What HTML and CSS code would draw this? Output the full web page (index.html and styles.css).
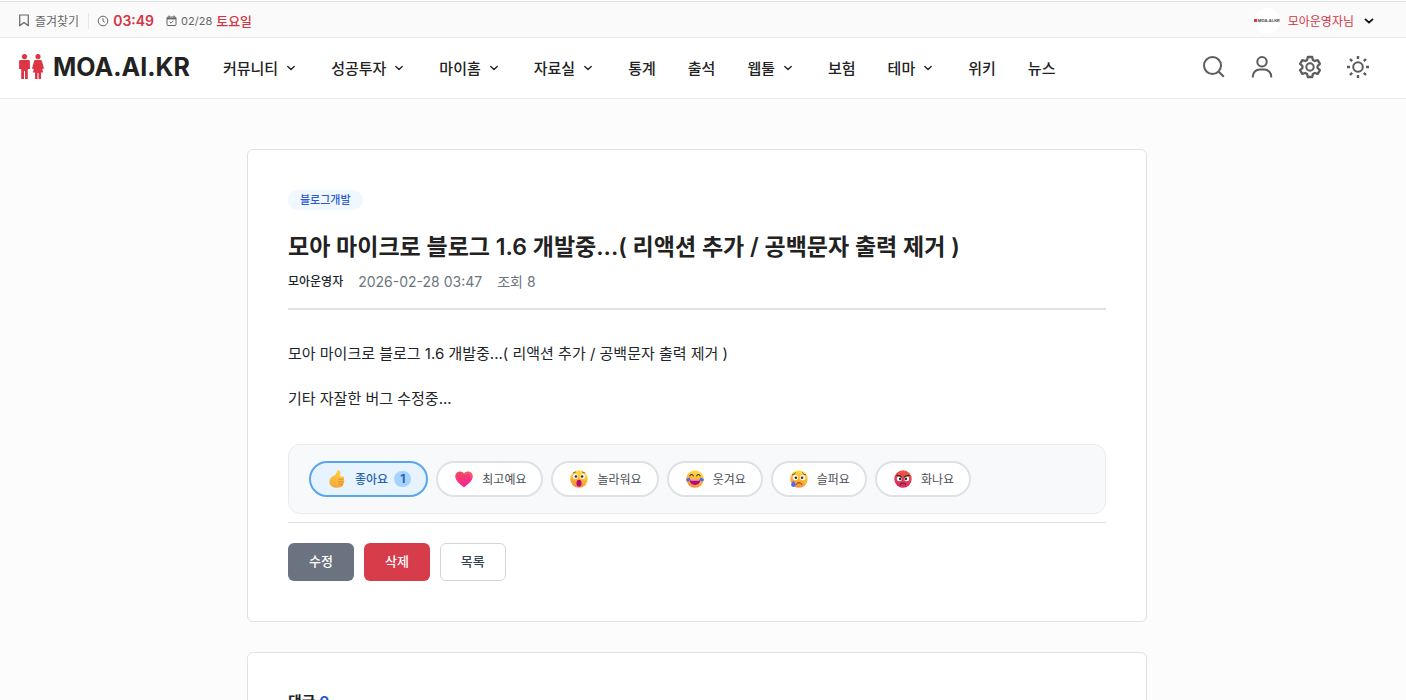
FILE: index.html
```html
<!DOCTYPE html>
<html lang="ko">
<head>
    <meta charset="UTF-8">
    <meta name="viewport" content="width=device-width, initial-scale=1.0">
    <title>모아 마이크로 블로그 1.6 개발중 - MOA.AI.KR</title>
    <link rel="stylesheet" href="styles.css">
</head>
<body>

    <!-- 공용 아이콘 -->
    <svg class="defs" aria-hidden="true">
        <defs>
            <linearGradient id="face" x1="0.7" y1="0" x2="0.4" y2="1">
                <stop offset="0" stop-color="#ffe34d"/>
                <stop offset="0.6" stop-color="#ffb02e"/>
                <stop offset="1" stop-color="#f58a45"/>
            </linearGradient>
            <linearGradient id="thumb" x1="0.6" y1="0" x2="0.4" y2="1">
                <stop offset="0" stop-color="#ffd03c"/>
                <stop offset="1" stop-color="#f5a83c"/>
            </linearGradient>
            <linearGradient id="heart" x1="0.3" y1="0" x2="0.6" y2="1">
                <stop offset="0" stop-color="#f4495c"/>
                <stop offset="1" stop-color="#f9209a"/>
            </linearGradient>
            <linearGradient id="angry" x1="0.6" y1="0" x2="0.4" y2="1">
                <stop offset="0" stop-color="#ee5a3c"/>
                <stop offset="1" stop-color="#d8256a"/>
            </linearGradient>
        </defs>
        <symbol id="chevron" viewBox="0 0 12 12">
            <path d="M2.8 4.6 6 7.6l3.2-3" fill="none" stroke="currentColor" stroke-width="1.4" stroke-linecap="round" stroke-linejoin="round"/>
        </symbol>
    </svg>

    <!-- 상단 바 -->
    <div class="topbar">
        <div class="topbar-left">
            <a href="#" class="bookmark">
                <svg width="12" height="13" viewBox="0 0 12 13"><path d="M1.700 1h8.600v10.800L6 8.600l-4.300 3.200z" fill="none" stroke="currentColor" stroke-width="1.200" stroke-linejoin="round"/></svg>
                즐겨찾기
            </a>
            <span class="clock">
                <svg width="12" height="12" viewBox="0 0 12 12" fill="none" stroke="currentColor"><circle cx="6" cy="6" r="4.8"/><path d="M6 3.2V6l1.8 1.2"/></svg>
                <strong class="time">03:49</strong>
            </span>
            <span class="date">
                <svg width="11" height="12" viewBox="0 0 11 12" fill="none" stroke="currentColor"><rect x="1" y="2" width="9" height="8.5" rx="1"/><path d="M1 3.6h9" stroke-width="1.6"/><path d="M3 .5V3M8 .5V3M3.6 6.8 5 8.2l2.5-2.5"/></svg>
                <span class="day">02/28</span>
                <strong class="weekday">토요일</strong>
            </span>
        </div>
        <a href="#" class="member">
            <span class="avatar"><span class="avatar-dot"></span>MOA.AI.KR</span>
            <span class="member-name">모아운영자님</span>
            <svg class="member-arrow" width="14" height="14" viewBox="0 0 12 12"><path d="M3 4.6 6 7.4l3-2.8" fill="none" stroke="currentColor" stroke-width="1.6" stroke-linecap="round" stroke-linejoin="round"/></svg>
        </a>
    </div>

    <!-- 메뉴 -->
    <header>
        <a href="#" class="logo">
            <svg width="26" height="28" viewBox="0 0 26 28" fill="currentColor">
                <circle cx="6.500" cy="3.600" r="2.600"/>
                <path d="M2.500 7h8a1.400 1.400 0 0 1 1.400 1.400V16H9.800v10H7v-8H6v8H3.200V16H1.100V8.400A1.400 1.400 0 0 1 2.500 7z"/>
                <circle cx="20" cy="3.600" r="2.600"/>
                <path d="M17.500 7h5a1.500 1.500 0 0 1 1.400 1l2.100 7.400-1.800.8 1 3.300H23V26h-2.500v-6h-1v6H17v-6.500h-2.200l1-3.300-1.800-.8L16.100 8a1.500 1.500 0 0 1 1.400-1z"/>
            </svg>
            MOA.AI.KR
        </a>
        <nav>
            <a href="#">커뮤니티<svg class="arrow"><use href="#chevron"/></svg></a>
            <a href="#">성공투자<svg class="arrow"><use href="#chevron"/></svg></a>
            <a href="#">마이홈<svg class="arrow"><use href="#chevron"/></svg></a>
            <a href="#">자료실<svg class="arrow"><use href="#chevron"/></svg></a>
            <a href="#">통계</a>
            <a href="#">출석</a>
            <a href="#">웹툴<svg class="arrow"><use href="#chevron"/></svg></a>
            <a href="#">보험</a>
            <a href="#">테마<svg class="arrow"><use href="#chevron"/></svg></a>
            <a href="#">위키</a>
            <a href="#">뉴스</a>
        </nav>
        <div class="tools">
            <button type="button" aria-label="검색">
                <svg viewBox="0 0 24 24"><circle cx="10.500" cy="10.500" r="8.500"/><path d="m16.800 16.800 5 5"/></svg>
            </button>
            <button type="button" aria-label="회원">
                <svg viewBox="0 0 24 24"><circle cx="12" cy="6.700" r="4.700"/><path d="M2.800 22.500v-1a7 7 0 0 1 7-7h4.400a7 7 0 0 1 7 7v1"/></svg>
            </button>
            <button type="button" aria-label="설정">
                <svg viewBox="0 0 24 24"><circle cx="12" cy="12" r="3.700"/><path d="M9.800 2h4.400l.7 3 1.800 1 3-.9 2.200 3.800-2.300 2.100v2l2.300 2.100-2.200 3.800-3-.9-1.800 1-.7 3H9.800l-.7-3-1.800-1-3 .9-2.200-3.800L4.400 13v-2L2.100 8.900l2.200-3.800 3 .9 1.800-1z" stroke-width="2.300" stroke-linejoin="round"/></svg>
            </button>
            <button type="button" aria-label="테마 전환">
                <svg viewBox="0 0 24 24"><circle cx="12" cy="12" r="4.800"/><path d="M12 1v3M12 20v3M1 12h3M20 12h3M4 4l2.200 2.200M17.800 17.800 20 20M4 20l2.200-2.200M17.800 6.200 20 4" stroke-width="2.400"/></svg>
            </button>
        </div>
    </header>

    <main>
        <!-- 본문 -->
        <article class="card">
            <a href="#" class="category">블로그개발</a>
            <h1>모아 마이크로 블로그 1.6 개발중...( 리액션 추가 / 공백문자 출력 제거 )</h1>
            <div class="meta">
                <span class="author">모아운영자</span>
                <span>2026-02-28 03:47</span>
                <span>조회 8</span>
            </div>

            <div class="content">
                <p>모아 마이크로 블로그 1.6 개발중...( 리액션 추가 / 공백문자 출력 제거 )</p>
                <p>기타 자잘한 버그 수정중...</p>
            </div>

            <!-- 리액션 -->
            <div class="reactions">
                <button type="button" class="reaction active">
                    <svg class="emoji" viewBox="0 0 32 32">
                        <path d="M17.500.5c3-.8 4.800 1.500 4.500 5L21 11.500h4.500c3.200 0 4.200 3.200 2.400 4.800 1.700 1.200 1.500 3.600 0 4.600 1.100 1.500.6 3.600-.9 4.300.5 2.200-.7 4.100-2.800 4.700-4.500 1.500-9.500 2-13.500 1C5.500 29.500 2.500 26 2.500 21c0-4.500 2-7 5.500-9.500C12.500 8.500 15.300 6.500 16 2.500c.1-1 .7-1.800 1.500-2z" fill="url(#thumb)"/>
                        <path d="M19 16.500h8M19 21h8M19 25.200h7" stroke="#d9803a" stroke-width="1.300" stroke-linecap="round"/>
                    </svg>
                    좋아요 <span class="count">1</span>
                </button>
                <button type="button" class="reaction">
                    <svg class="emoji" viewBox="0 0 32 32">
                        <path d="M9 2.500c3 0 5.500 1.500 7 4 1.500-2.500 4-4 7-4 5 0 8.500 4 8.500 8.500C31.500 19 22.500 26 16 30.500 9.500 26 .5 19 .5 11 .5 6.500 4 2.500 9 2.500z" fill="url(#heart)"/>
                        <path d="M19 8c1-2 3-3.200 5-3 3.600.400 5.400 4.500 4.500 8" fill="none" stroke="#ff6b68" stroke-width="2" stroke-linecap="round"/>
                    </svg>
                    최고예요
                </button>
                <button type="button" class="reaction">
                    <svg class="emoji" viewBox="0 0 32 32">
                        <circle cx="16" cy="16" r="15.500" fill="url(#face)"/>
                        <circle cx="9.500" cy="11.500" r="4.500" fill="#fff"/><circle cx="22.500" cy="11.500" r="4.500" fill="#fff"/>
                        <circle cx="10.500" cy="11.500" r="2.300" fill="#402a32"/><circle cx="21.500" cy="11.500" r="2.300" fill="#402a32"/>
                        <path d="M6 5.200 10 3.500M26 5.200 22 3.500" stroke="#6d4534" stroke-width="1.400" stroke-linecap="round"/>
                        <ellipse cx="16" cy="23.500" rx="4.500" ry="6" fill="#b5087a"/>
                    </svg>
                    놀라워요
                </button>
                <button type="button" class="reaction">
                    <svg class="emoji" viewBox="0 0 32 32">
                        <circle cx="16" cy="16" r="15.500" fill="url(#face)"/>
                        <path d="M7 10.500c1-3.500 5-3.500 6 0M19 10.500c1-3.500 5-3.500 6 0" fill="none" stroke="#402a32" stroke-width="1.800" stroke-linecap="round"/>
                        <path d="M6.500 17h19c0 6-4 9.500-9.500 9.500S6.500 23 6.500 17z" fill="#b5087a"/>
                        <path d="M8 17h16v1.600H8z" fill="#fff"/>
                        <path d="M7 13.500c1 4-.5 7-3.500 7S-.5 17.500 1 16s4-2 6-2.500zM25 13.500c-1 4 .5 7 3.500 7s4-3 2.500-4.500-4-2-6-2.500z" fill="#4c6cf0"/>
                    </svg>
                    웃겨요
                </button>
                <button type="button" class="reaction">
                    <svg class="emoji" viewBox="0 0 32 32">
                        <circle cx="16" cy="16" r="15.500" fill="url(#face)"/>
                        <circle cx="9.500" cy="13.500" r="4.600" fill="#fff"/><circle cx="22.500" cy="13.500" r="4.600" fill="#fff"/>
                        <circle cx="10.500" cy="13.800" r="2.300" fill="#402a32"/><circle cx="21.500" cy="13.800" r="2.300" fill="#402a32"/>
                        <path d="M4.500 8.500c2.500-.5 4-1.500 5-3.500M27.500 8.500c-2.500-.5-4-1.500-5-3.500M11 25.500c1.500-4 8.500-4 10 0" fill="none" stroke="#5a3435" stroke-width="1.700" stroke-linecap="round"/>
                        <path d="M6 19c2.500 3 4 5 4 7.200C10 28.500 8.300 30 6 30s-4-1.500-4-3.800C2 24 3.500 22 6 19z" fill="#4c6cf0"/>
                    </svg>
                    슬퍼요
                </button>
                <button type="button" class="reaction">
                    <svg class="emoji" viewBox="0 0 32 32">
                        <circle cx="16" cy="16" r="15.500" fill="url(#angry)"/>
                        <circle cx="9.500" cy="15.500" r="4.500" fill="#fff"/><circle cx="22.500" cy="15.500" r="4.500" fill="#fff"/>
                        <circle cx="11" cy="15.800" r="2.300" fill="#402a32"/><circle cx="21" cy="15.800" r="2.300" fill="#402a32"/>
                        <path d="M5 9.500c4 0 7 1 8.500 3.500M27 9.500c-4 0-7 1-8.500 3.500M11 26c1.500-4 8.500-4 10 0" fill="none" stroke="#402a32" stroke-width="1.900" stroke-linecap="round"/>
                    </svg>
                    화나요
                </button>
            </div>

            <div class="actions">
                <button type="button" class="btn btn-edit">수정</button>
                <button type="button" class="btn btn-delete">삭제</button>
                <button type="button" class="btn btn-list">목록</button>
            </div>
        </article>

        <!-- 댓글 -->
        <section class="card comments">
            <h2>댓글 <span>0</span></h2>
        </section>
    </main>

</body>
</html>
```
FILE: styles.css
```css
* { box-sizing: border-box; }
html { overflow: hidden; height: 100%; }
body {
    margin: 0; height: 100%; overflow: hidden;
    background: #fcfcfc; color: #212529;
    font-family: Inter, "Noto Sans CJK KR", sans-serif;
    font-size: 15px;
}
a { color: inherit; text-decoration: none; }
button { font-family: inherit; cursor: pointer; }
svg { flex: none; }
.defs { position: absolute; width: 0; height: 0; }

/* 상단 바 */
.topbar {
    display: flex; justify-content: space-between; align-items: center;
    height: 38px; padding: 4px 30px 0 18px;
    background: linear-gradient(#fff 1px, #dee0e2 1px, #dee0e2 2px, #fafafa 2px);
    border-bottom: 1px solid #ececec;
    color: #666; font-size: 12px;
}
.topbar-left, .bookmark, .clock, .date, .member { display: flex; align-items: center; }
.bookmark { gap: 5px; padding-right: 9px; border-right: 1px solid #e8e8e8; height: 16px; }
.clock { gap: 4px; margin-left: 8px; }
.time { color: #d63343; font-size: 14px; font-weight: 600; }
.date { gap: 4px; margin-left: 12px; }
.day { font-size: 11px; }
.weekday { color: #d63343; font-size: 13px; font-weight: 500; }
.member { gap: 8px; color: #d63343; }
.avatar {
    display: flex; align-items: center; justify-content: center; gap: 1px;
    width: 26px; height: 26px; border-radius: 50%; background: #fff;
    color: #444; font-size: 4px; font-weight: 700;
}
.avatar-dot { width: 3px; height: 3px; background: #dc3545; }
.member-arrow { color: #111; }

/* 메뉴 */
header {
    display: flex; align-items: center;
    height: 61px; padding: 0 36px 2px 18px;
    background: #fff; border-bottom: 1px solid #ececec;
}
.logo {
    display: flex; align-items: center; gap: 9px;
    font-size: 25px; font-weight: 700; color: #222;
}
.logo svg { color: #dc3545; }
nav { display: flex; gap: 32px; margin-left: 33px; font-weight: 500; color: #222; white-space: nowrap; }
nav a { display: flex; align-items: center; }
.arrow { width: 12px; height: 12px; margin: 2px 2px 0 7px; }
.tools { display: flex; gap: 24px; margin-left: auto; }
.tools button { display: flex; padding: 0; border: 0; background: none; color: #5c5c5c; }
.tools svg { width: 24px; height: 24px; fill: none; stroke: currentColor; stroke-width: 2; }

/* 카드 */
main { max-width: 952px; margin: 0 auto; padding: 50px 32px 0 20px; }
.card {
    display: flow-root; padding: 40px; margin-bottom: 30px;
    background: #fff; border: 1px solid #dee2e6; border-radius: 6px;
}
.category {
    display: block; width: fit-content; padding: 0 12px;
    border-radius: 10px; background: #f0f7ff; color: #2a5bd0;
    font-size: 11px; font-weight: 500; line-height: 20px;
}
h1 { margin: 19px 0 3px; font-size: 23px; font-weight: 600; line-height: 36px; color: #222; }
.meta {
    display: flex; gap: 15px; padding-bottom: 12px;
    border-bottom: 2px solid #dee2e6;
    color: #6c757d; font-size: 14px; line-height: 28px;
}
.author { color: #212529; font-size: 12px; font-weight: 500; }

.content { padding: 30px 0 32px; }
.content p { margin: 0 0 18px; line-height: 27px; }
.content p:last-child { margin: 0; }

/* 리액션 */
.reactions {
    display: flex; flex-wrap: wrap; gap: 8px; padding: 16px 20px;
    background: #f8f9fa; border: 1px solid #e9ecef; border-radius: 12px;
}
.reaction {
    display: flex; align-items: center; gap: 6px;
    height: 36px; padding: 0 15px 1px 14px;
    background: #fff; border: 2px solid #dee2e6; border-radius: 18px;
    color: #495057; font-size: 12px;
}
.emoji { width: 24px; height: 18px; }
.reaction.active { background: #e7f3ff; border-color: #58a6f0; color: #2563b0; font-weight: 500; }
.count {
    padding: 0 6px; border-radius: 8px; background: #a5d3ff;
    line-height: 16px; font-weight: 700;
}

/* 버튼 */
.actions {
    display: flex; gap: 10px; margin-top: 8px; padding-top: 20px;
    border-top: 1px solid #dee2e6;
}
.btn {
    height: 38px; padding: 0 20px 3px; border: 1px solid transparent; border-radius: 6px;
    font-size: 13px; font-weight: 500; color: #fff;
}
.btn-edit { background: #6b7280; }
.btn-delete { background: #d63c4a; }
.btn-list { background: #fff; border-color: #d1d5db; color: #374151; }

/* 댓글 */
.comments h2 { margin: 0; font-size: 15px; line-height: 18px; color: #222; }
.comments h2 span { color: #2a5bd0; }
```
